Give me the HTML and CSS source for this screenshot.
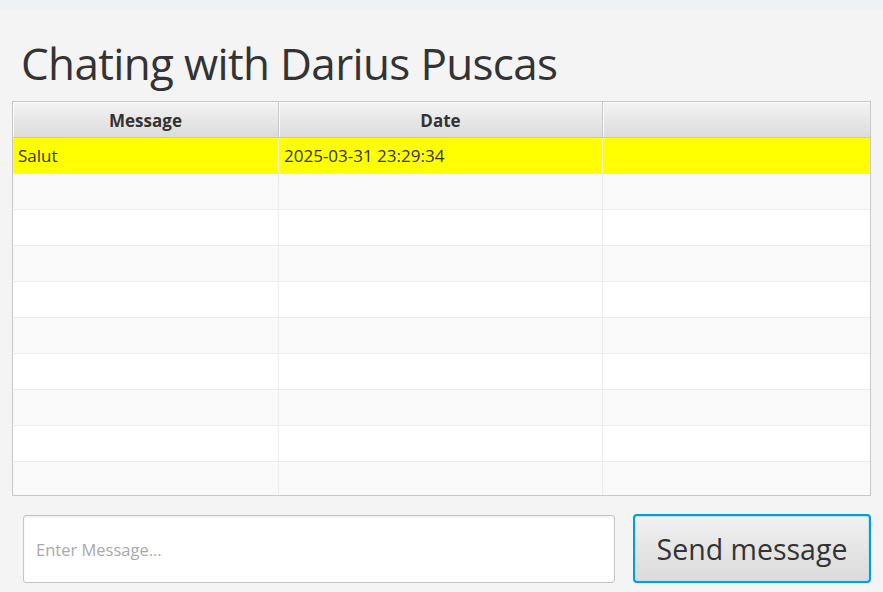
FILE: index.html
```html
<!DOCTYPE html>
<html>
<head>
<meta charset="utf-8">
<link rel="stylesheet" href="styles.css">
</head>
<body>
<div class="strip"></div>
<main class="app">
  <h1 class="title">Chating with Darius Puscas</h1>
  <div class="table">
    <div class="row head">
      <div class="cell c1">Message</div>
      <div class="cell c2">Date</div>
      <div class="cell c3"></div>
    </div>
    <div class="body">
      <div class="row sel"><div class="cell c1">Salut</div><div class="cell c2">2025-03-31 23:29:34</div><div class="cell c3"></div></div>
      <div class="row odd"><div class="cell c1"></div><div class="cell c2"></div><div class="cell c3"></div></div>
      <div class="row"><div class="cell c1"></div><div class="cell c2"></div><div class="cell c3"></div></div>
      <div class="row odd"><div class="cell c1"></div><div class="cell c2"></div><div class="cell c3"></div></div>
      <div class="row"><div class="cell c1"></div><div class="cell c2"></div><div class="cell c3"></div></div>
      <div class="row odd"><div class="cell c1"></div><div class="cell c2"></div><div class="cell c3"></div></div>
      <div class="row"><div class="cell c1"></div><div class="cell c2"></div><div class="cell c3"></div></div>
      <div class="row odd"><div class="cell c1"></div><div class="cell c2"></div><div class="cell c3"></div></div>
      <div class="row"><div class="cell c1"></div><div class="cell c2"></div><div class="cell c3"></div></div>
      <div class="row odd"><div class="cell c1"></div><div class="cell c2"></div><div class="cell c3"></div></div>
    </div>
  </div>
  <div class="compose">
    <input class="input" type="text" placeholder="Enter Message...">
    <button class="send">Send message</button>
  </div>
</main>
</body>
</html>
```

FILE: styles.css
```css
* { box-sizing: border-box; }
html, body { margin: 0; padding: 0; }
body {
  width: 883px;
  height: 592px;
  overflow: hidden;
  background: #f4f4f4;
  font-family: "Open Sans", "Noto Sans", sans-serif;
  color: #333333;
}
.strip {
  height: 9px;
  background: #eef2f7;
}
.app {
  display: flex;
  flex-direction: column;
}
.title {
  margin: 0;
  padding: 16px 0 0 21px;
  height: 92px;
  display: flex;
  align-items: center;
  font-weight: 400;
  font-size: 44px;
  letter-spacing: -0.65px;
  color: #333333;
}
.table {
  margin: 0 12px;
  border: 1px solid #c8c8c8;
  background: #ffffff;
}
.row {
  display: grid;
  grid-template-columns: 266px 324px 267px;
  height: 36px;
}
.cell {
  border-right: 1px solid #ececec;
  display: flex;
  align-items: center;
  padding-left: 5px;
  font-size: 17px;
}
.cell.c3 { border-right: none; }
.head {
  background: linear-gradient(#f3f3f3, #dcdcdc);
  border-bottom: 1px solid #c8c8c8;
}
.head .cell {
  justify-content: center;
  padding-left: 0;
  padding-top: 2px;
  font-weight: 700;
  font-size: 17px;
  border-right: 1px solid #c8c8c8;
  box-shadow: inset 1px 1px 0 #fafafa;
}
.head .cell.c3 { border-right: none; }
.body {
  height: 357px;
  overflow: hidden;
}
.body .row { border-bottom: 1px solid #ececec; }
.body .row.odd { background: #f9f9f9; }
.body .row.sel { background: #ffff00; border-bottom-color: #ffff00; }
.body .row.sel .cell { border-right-color: #f4f4d0; color: #333333; }
.compose {
  display: flex;
  gap: 18px;
  padding: 18px 12px 0 23px;
  align-items: flex-start;
}
.input {
  flex: 1;
  height: 68px;
  margin-top: 1px;
  border: 1px solid #c4c4c4;
  border-radius: 3px;
  background: #ffffff;
  box-shadow: inset 0 2px 2px rgba(0,0,0,0.05);
  padding: 0 12px;
  font-family: "Open Sans", "Noto Sans", sans-serif;
  font-size: 16.5px;
  color: #333;
  outline: none;
}
.input::placeholder { color: #a9a9a9; }
.send {
  width: 238px;
  height: 69px;
  border: 2px solid #039ed3;
  border-radius: 4px;
  box-shadow: inset 0 0 0 1px #bfe3f2;
  background: linear-gradient(#f1f1f1, #dadada);
  font-family: "Open Sans", "Noto Sans", sans-serif;
  font-size: 28.5px;
  color: #333333;
  padding: 0;
}
```
